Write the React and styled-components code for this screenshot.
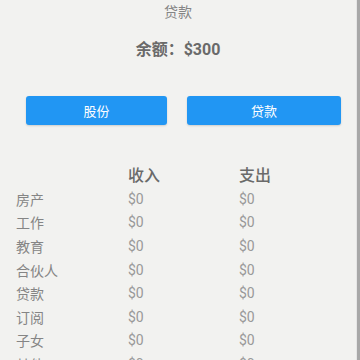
import React from "react";
import styled, { createGlobalStyle } from "styled-components";

const GlobalStyle = createGlobalStyle`
        html, body {
                margin: 0;
                padding: 0;
                background: #f2f2f0;
                font-family: Roboto, "Noto Sans CJK SC", sans-serif;
                overflow: hidden;
        }
`;

export default function App() {
        const rows = ["房产", "工作", "教育", "合伙人", "贷款", "订阅", "子女", "其他"];

        return (
                <>
                        <GlobalStyle />
                        <Page>
                                <Title>贷款</Title>
                                <Balance>余额：$300</Balance>
                                <Buttons>
                                        <Button>股份</Button>
                                        <Button>贷款</Button>
                                </Buttons>
                                <Table>
                                        <Cell />
                                        <Head>收入</Head>
                                        <Head>支出</Head>
                                        {rows.map(row => (
                                                <React.Fragment key={row}>
                                                        <Cell>{row}</Cell>
                                                        <Value>$0</Value>
                                                        <Value>$0</Value>
                                                </React.Fragment>
                                        ))}
                                </Table>
                        </Page>
                        <ScrollBar />
                </>
        );
}

const Page = styled.div`
        width: 356px;
        height: 360px;
        display: flex;
        flex-direction: column;
        align-items: center;
        overflow: hidden;
`;

const Title = styled.div`
        margin-top: 2px;
        height: 20px;
        line-height: 20px;
        font-size: 14px;
        color: #858585;
`;

const Balance = styled.div`
        margin-top: 16px;
        height: 24px;
        line-height: 24px;
        font-size: 16px;
        font-weight: bold;
        color: #6a6a6a;
`;

const Buttons = styled.div`
        margin-top: 34px;
        width: 100%;
        box-sizing: border-box;
        padding: 0 16px 0 26px;
        display: grid;
        grid-template-columns: 141px 154px;
        column-gap: 20px;
`;

const Button = styled.button`
        height: 29px;
        border: none;
        border-radius: 3px;
        background: #2196f3;
        color: #ffffff;
        font-family: Roboto, "Noto Sans CJK SC", sans-serif;
        font-size: 13px;
        padding: 0;
        box-shadow: 0 1px 2px rgba(0, 0, 0, 0.15);
`;

const Table = styled.div`
        margin-top: 36px;
        width: 100%;
        box-sizing: border-box;
        padding-left: 16px;
        display: grid;
        grid-template-columns: 112px 111px 1fr;
        grid-template-rows: 26px;
        grid-auto-rows: 23.6px;
        align-items: center;
`;

const Cell = styled.div`
        font-size: 14px;
        color: #858585;
        white-space: nowrap;
`;

const Head = styled.div`
        font-size: 16px;
        font-weight: 500;
        color: #6a6a6a;
`;

const Value = styled.div`
        font-size: 14px;
        color: #999999;
`;

const ScrollBar = styled.div`
        position: fixed;
        top: 0;
        right: 0;
        width: 3px;
        height: 100vh;
        background: #a8a8a8;
        border-left: 1px solid #e6e6e6;
`;
